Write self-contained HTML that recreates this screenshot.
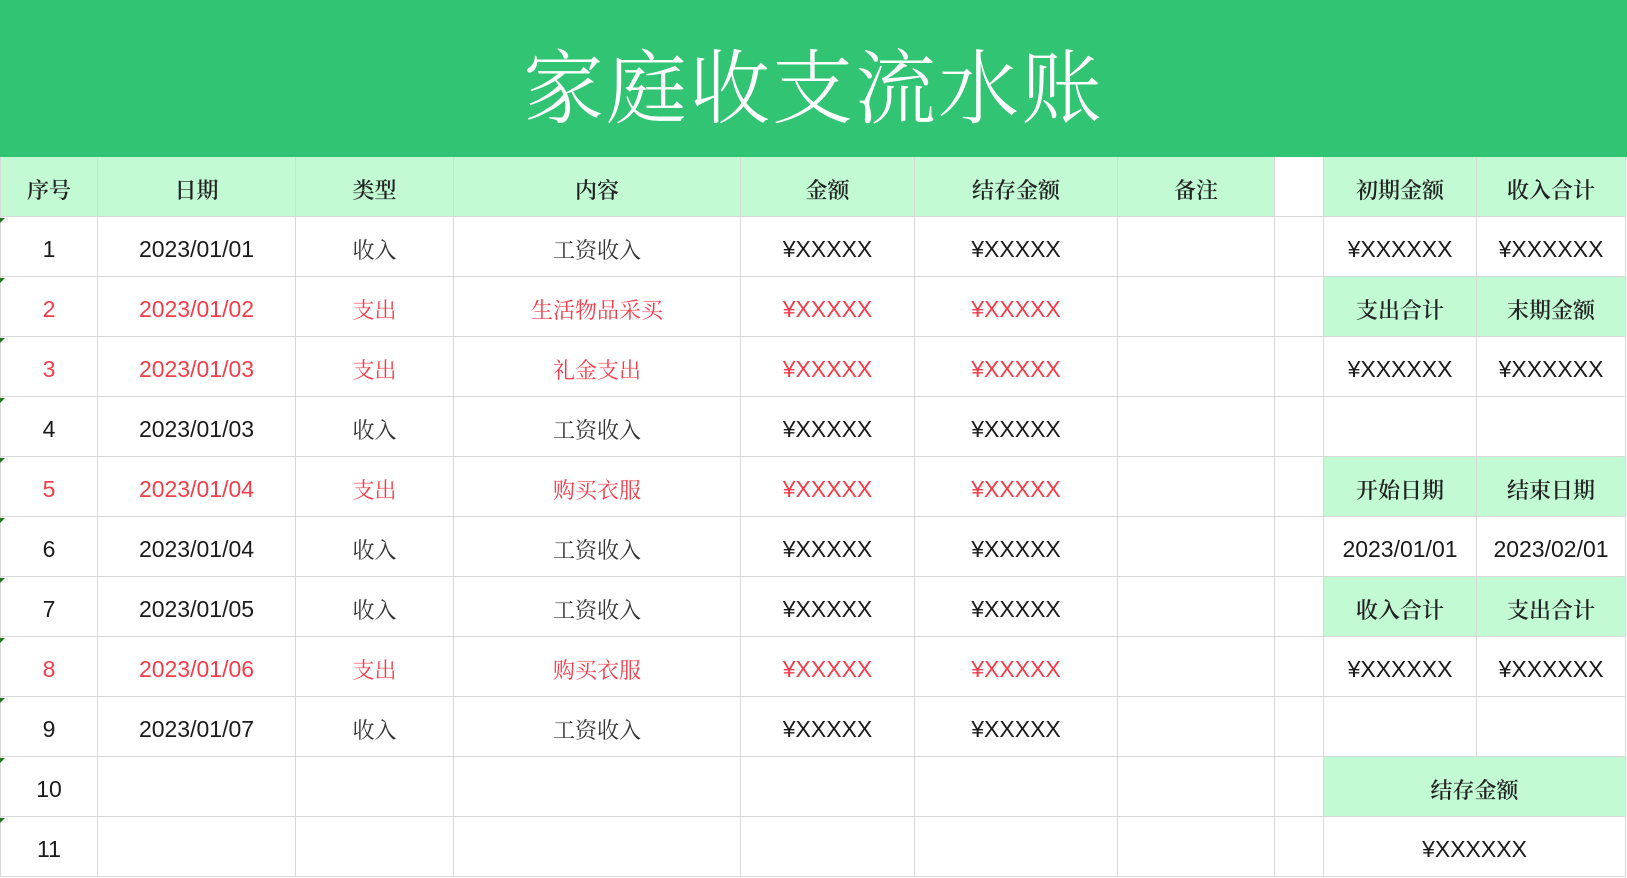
<!DOCTYPE html>
<html><head><meta charset="utf-8"><style>
*{margin:0;padding:0;box-sizing:border-box}
body{width:1627px;height:878px;background:#fff;position:relative;overflow:hidden;font-family:"Liberation Sans","Noto Sans CJK SC",sans-serif}
.title{position:absolute;left:0;top:0;width:1627px;height:157px;background:#30c473;color:#fff;font-family:"Noto Serif CJK SC",serif;font-size:81px;font-weight:300;text-align:center;line-height:166px;letter-spacing:2px}
.c{position:absolute;display:flex;align-items:center;justify-content:center;padding-top:5px;border-right:1px solid #d9d9d9;border-bottom:1px solid #d9d9d9;font-size:23px;color:#1a1a1a}
.h{background:#c1fad3;font-family:"Noto Serif CJK SC",serif;font-weight:600;font-size:22px;color:#222}
.z{font-family:"Noto Serif CJK SC",serif;font-size:22px;color:#333}
.r{color:#f53c4a}
.tri{position:absolute;left:0;width:0;height:0;border-top:5px solid #1a7a1a;border-right:5px solid transparent}
</style></head><body>
<div class="title">家庭收支流水账</div>
<div id="g"></div>
<script>
var X=[0,98,296,454,741,915,1118,1275,1324,1477,1626];
var Y=[157,217,277,337,397,457,517,577,637,697,757,817,877];
var h='';
function cell(c1,c2,r,txt,cls){h+='<div class="c '+(cls||'')+'" style="left:'+X[c1]+'px;top:'+Y[r]+'px;width:'+(X[c2]-X[c1])+'px;height:'+(Y[r+1]-Y[r])+'px;'+(c1==0?'border-left:1px solid #d9d9d9;':'')+'">'+txt+'</div>';}
var hd=['序号','日期','类型','内容','金额','结存金额','备注'];
for(var i=0;i<7;i++)cell(i,i+1,0,hd[i],'h');
cell(7,8,0,'');
var rows=[['1','2023/01/01','收入','工资收入',0],['2','2023/01/02','支出','生活物品采买',1],['3','2023/01/03','支出','礼金支出',1],['4','2023/01/03','收入','工资收入',0],['5','2023/01/04','支出','购买衣服',1],['6','2023/01/04','收入','工资收入',0],['7','2023/01/05','收入','工资收入',0],['8','2023/01/06','支出','购买衣服',1],['9','2023/01/07','收入','工资收入',0],['10','','','',2],['11','','','',2]];
rows.forEach(function(d,k){var r=k+1,red=d[4]==1?' r':'';
cell(0,1,r,d[0],red);cell(1,2,r,d[1],red);cell(2,3,r,d[2],'z'+red);cell(3,4,r,d[3],'z'+red);
cell(4,5,r,d[4]==2?'':'¥XXXXX',red);cell(5,6,r,d[4]==2?'':'¥XXXXX',red);cell(6,7,r,'');cell(7,8,r,'');
h+='<div class="tri" style="top:'+(Y[r]+1)+'px"></div>';});
var R=[['初期金额','收入合计',1],['¥XXXXXX','¥XXXXXX',0],['支出合计','末期金额',1],['¥XXXXXX','¥XXXXXX',0],['','',0],['开始日期','结束日期',1],['2023/01/01','2023/02/01',0],['收入合计','支出合计',1],['¥XXXXXX','¥XXXXXX',0],['','',0]];
R.forEach(function(d,r){cell(8,9,r,d[0],d[2]?'h':'');cell(9,10,r,d[1],d[2]?'h':'');});
cell(8,10,10,'结存金额','h');cell(8,10,11,'¥XXXXXX');
document.getElementById('g').innerHTML=h;
</script>
</body></html>
